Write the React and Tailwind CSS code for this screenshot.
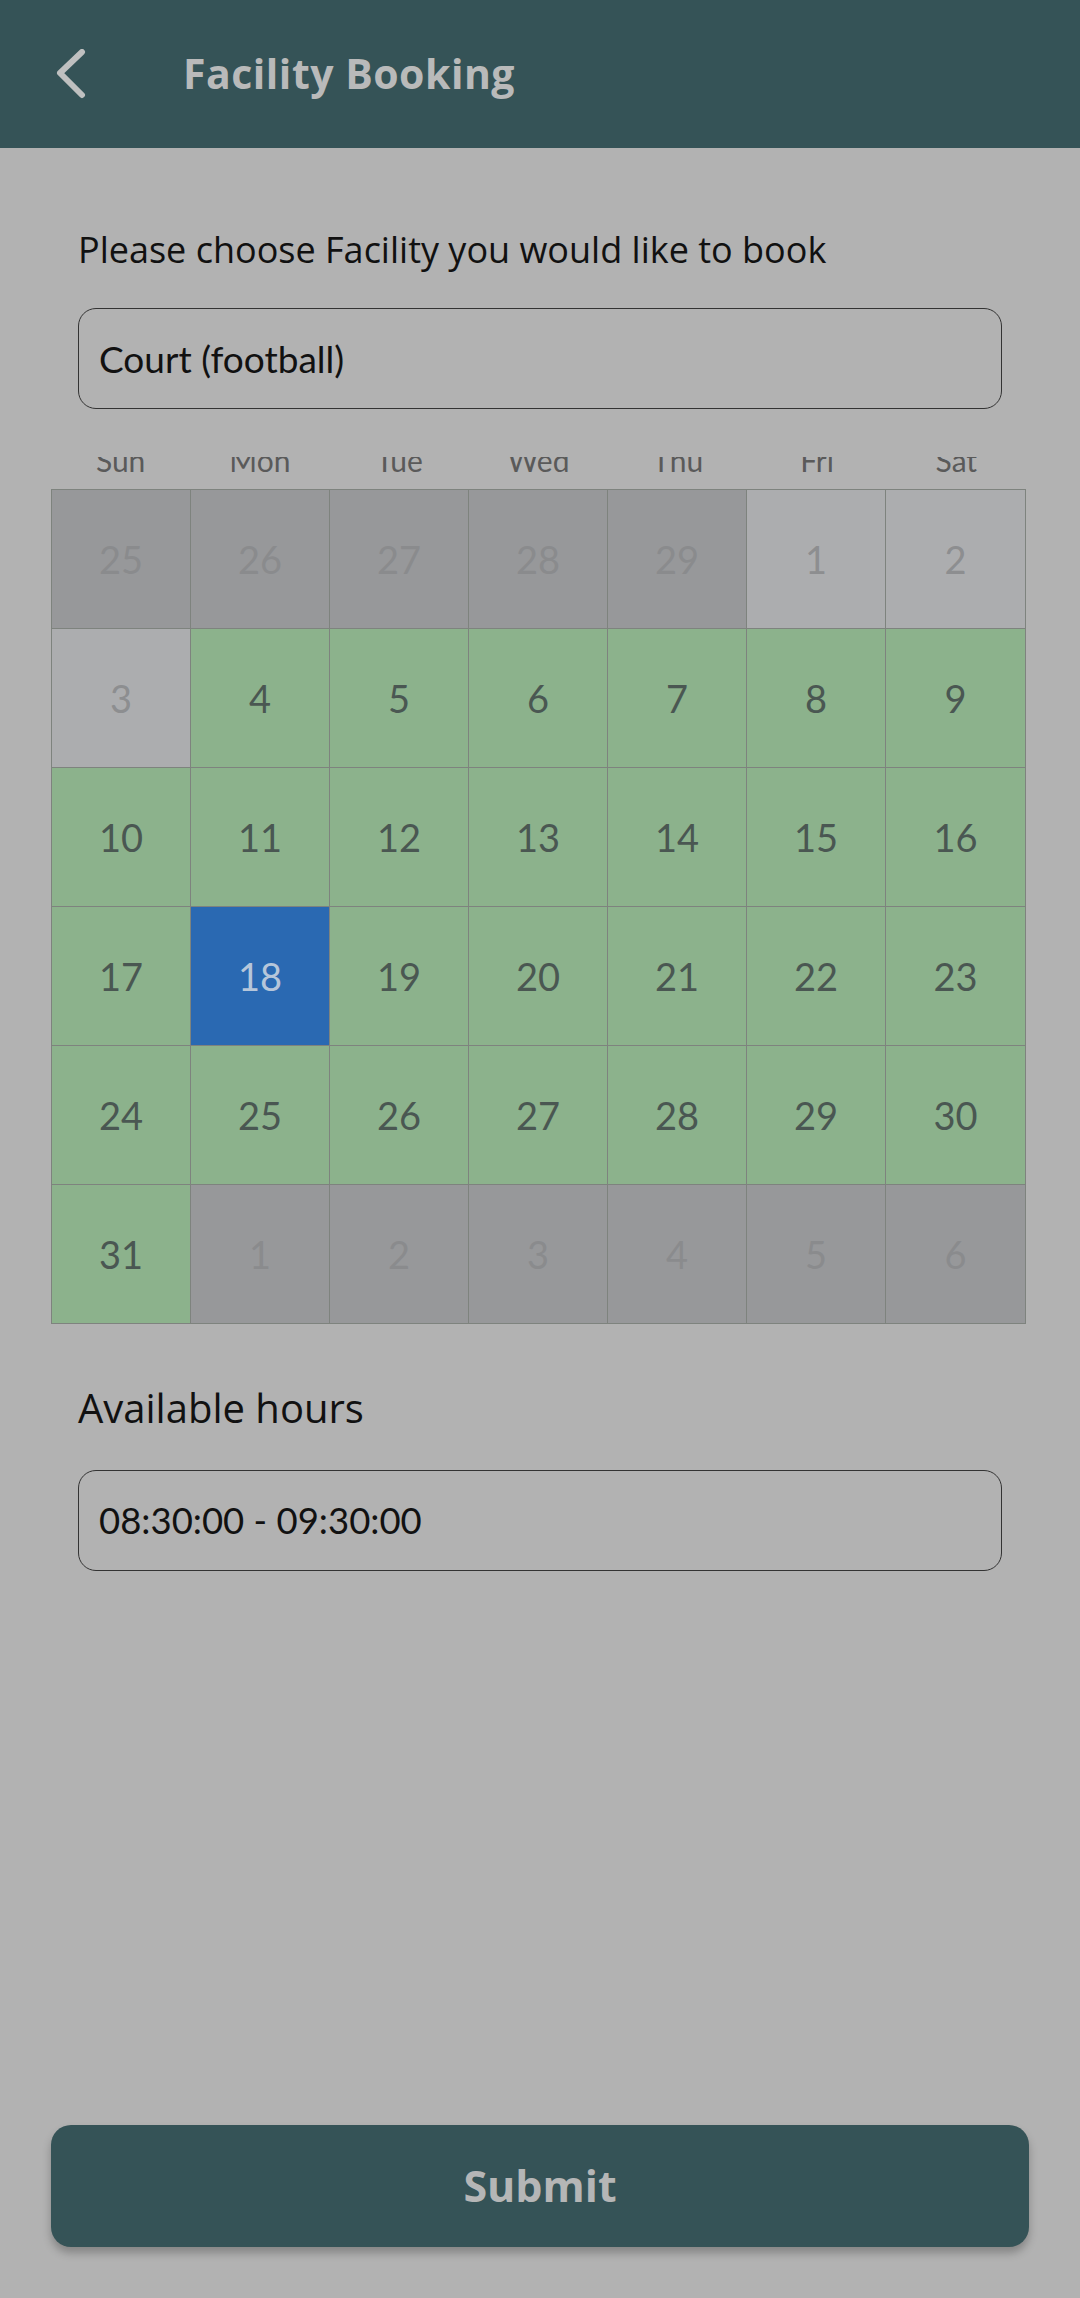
import React from 'react';

const days = ['Sun', 'Mon', 'Tue', 'Wed', 'Thu', 'Fri', 'Sat'];

// kind: out = other month, off = past day, ok = available, sel = selected
const cells = [
  [25, 'out'], [26, 'out'], [27, 'out'], [28, 'out'], [29, 'out'], [1, 'off'], [2, 'off'],
  [3, 'off'], [4, 'ok'], [5, 'ok'], [6, 'ok'], [7, 'ok'], [8, 'ok'], [9, 'ok'],
  [10, 'ok'], [11, 'ok'], [12, 'ok'], [13, 'ok'], [14, 'ok'], [15, 'ok'], [16, 'ok'],
  [17, 'ok'], [18, 'sel'], [19, 'ok'], [20, 'ok'], [21, 'ok'], [22, 'ok'], [23, 'ok'],
  [24, 'ok'], [25, 'ok'], [26, 'ok'], [27, 'ok'], [28, 'ok'], [29, 'ok'], [30, 'ok'],
  [31, 'ok'], [1, 'out'], [2, 'out'], [3, 'out'], [4, 'out'], [5, 'out'], [6, 'out'],
];

const cellStyles = {
  out: 'bg-[#97989a] text-[#8a8b8d]',
  off: 'bg-[#acadaf] text-[#8d8e90]',
  ok: 'bg-[#8cb28c] text-[#4a5752]',
  sel: 'bg-[#2a69b2] text-[#b6c6da]',
};

const DayCell = ({ day, kind, index }) => {
  const lastCol = index % 7 === 6;
  return (
    <div
      className={`h-[139px] flex items-center justify-center border-b border-[#7e837e] ${lastCol ? '' : 'border-r'} ${cellStyles[kind]}`}
    >
      <span className="text-[38px] font-normal">{day}</span>
    </div>
  );
};

const App = () => {
  return (
    <div
      className="h-[2298px] w-[1080px] bg-[#b2b2b2] flex flex-col"
      style={{ fontFamily: 'Lato, "Open Sans", sans-serif' }}
    >
      <header className="h-[148px] bg-[#355357] flex items-center shrink-0">
        <div className="w-[183px] pl-[56px] flex items-center">
          <svg width="30" height="50" viewBox="0 0 30 50" fill="none">
            <path d="M26 3 L4 24 L26 46" stroke="#bfc0c0" strokeWidth="6" strokeLinecap="round" strokeLinejoin="round" />
          </svg>
        </div>
        <h1 className="text-[41px] font-bold text-[#b9baba] tracking-[0.5px]" style={{ fontFamily: '"Open Sans", sans-serif' }}>
          Facility Booking
        </h1>
      </header>

      <div className="px-[78px] pt-[82px]">
        <p className="text-[36px] text-[#111] leading-[40px]" style={{ fontFamily: '"Open Sans", sans-serif' }}>
          Please choose Facility you would like to book
        </p>
        <div className="mt-[38px] h-[101px] rounded-[18px] border-[1.5px] border-[#333] flex items-center pl-[20px]">
          <span className="text-[37px] text-[#111]">Court (football)</span>
        </div>
      </div>

      <div className="ml-[51px] mr-[54px] mt-[48px] h-[32px] overflow-hidden grid grid-cols-7">
        {days.map((d) => (
          <div key={d} className="flex justify-center">
            <span className="text-[30px] leading-none text-[#5a5a5a] -mt-[12px]">{d}</span>
          </div>
        ))}
      </div>

      <div className="ml-[51px] mr-[54px] grid grid-cols-7 border-t border-l border-r border-[#7e837e]">
        {cells.map(([day, kind], i) => (
          <DayCell key={i} day={day} kind={kind} index={i} />
        ))}
      </div>

      <div className="px-[78px] pt-[64px]">
        <p className="text-[40px] text-[#111] leading-[40px]" style={{ fontFamily: '"Open Sans", sans-serif' }}>
          Available hours
        </p>
        <div className="mt-[42px] h-[101px] rounded-[18px] border-[1.5px] border-[#333] flex items-center pl-[20px]">
          <span className="text-[36.5px] text-[#111]">08:30:00 - 09:30:00</span>
        </div>
      </div>

      <div className="flex-1" />

      <div className="px-[51px] pb-[51px]">
        <button className="w-full h-[122px] rounded-[20px] bg-[#355357] shadow-[0_6px_8px_rgba(0,0,0,0.25)] flex items-center justify-center">
          <span className="text-[43px] font-bold text-[#b5b6b6]" style={{ fontFamily: '"Open Sans", sans-serif' }}>
            Submit
          </span>
        </button>
      </div>
    </div>
  );
};

export default App;
